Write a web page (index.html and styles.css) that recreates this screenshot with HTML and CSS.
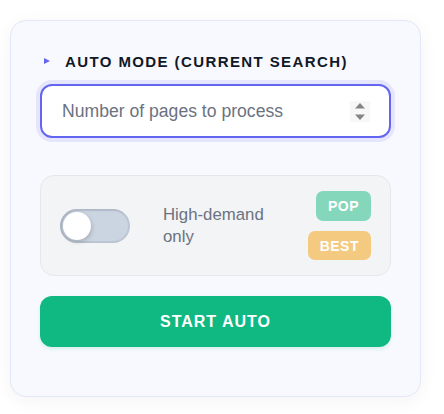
FILE: index.html
```html
<!DOCTYPE html>
<html lang="en">
<head>
<meta charset="utf-8">
<title>Auto mode</title>
<link rel="stylesheet" href="styles.css">
</head>
<body>
<div class="card">
  <div class="title">
    <svg class="marker" width="6" height="6" viewBox="0 0 6 6"><path d="M0 0 L6 3 L0 6 Z" fill="#6366f1"/></svg>
    <span>AUTO MODE (CURRENT SEARCH)</span>
  </div>
  <div class="field">
    <input class="pages" type="number" placeholder="Number of pages to process">
    <svg class="spin" width="20" height="21" viewBox="0 0 20 21" aria-hidden="true">
      <rect x="0" y="0" width="20" height="21" fill="#f7f7f8"/>
      <path d="M5 7.5 L10 2 L15 7.5 Z" fill="#858585"/>
      <path d="M5 13.5 L15 13.5 L10 19 Z" fill="#858585"/>
    </svg>
  </div>
  <div class="options">
    <div class="switch"><span class="knob"></span></div>
    <div class="label">High-demand only</div>
    <div class="badges">
      <span class="badge pop">POP</span>
      <span class="badge best">BEST</span>
    </div>
  </div>
  <button class="start">START AUTO</button>
</div>
</body>
</html>
```

FILE: styles.css
```css
* { box-sizing: border-box; }
html, body { margin: 0; padding: 0; background: #ffffff; }
body {
  font-family: "Liberation Sans", Arial, sans-serif;
  padding: 20px 10px;
}
.card {
  width: 411px;
  background: #f8f9fe;
  border: 1px solid #e3e8f6;
  border-radius: 16px;
  padding: 29px 29px 49px;
  box-shadow: 0 4px 18px rgba(30, 40, 90, 0.05);
}
.title {
  display: flex;
  align-items: center;
  height: 22px;
  margin-bottom: 12px;
  color: #111827;
  font-size: 15px;
  font-weight: 700;
  letter-spacing: 1.4px;
}
.marker { margin-left: 4px; margin-right: 15px; flex: none; }
.field { display: flex; position: relative; }
.pages {
  width: 100%;
  height: 54px;
  border: 2px solid #6366f1;
  border-radius: 12px;
  background: #ffffff;
  box-shadow: 0 0 0 4px rgba(99, 102, 241, 0.13);
  padding: 0 20px;
  font-family: "Liberation Sans", Arial, sans-serif;
  font-size: 17.6px;
  color: #374151;
  outline: none;
  -moz-appearance: textfield;
}
.pages::placeholder { color: #6b7280; }
.pages::-webkit-inner-spin-button,
.pages::-webkit-outer-spin-button { -webkit-appearance: none; margin: 0; }
.spin {
  position: absolute;
  right: 21px;
  top: 16.5px;
  pointer-events: none;
}
.options {
  display: flex;
  align-items: center;
  gap: 32px;
  margin-top: 37px;
  padding: 15px 19px;
  background: #f3f4f6;
  border: 1px solid #e5e7eb;
  border-radius: 14px;
}
.switch {
  flex: none;
  width: 70px;
  height: 34px;
  border-radius: 17px;
  background: #cbd5e1;
  box-shadow: inset 0 0 0 2px rgba(120, 135, 160, 0.18), inset 2px 1px 3px rgba(0, 0, 0, 0.12);
  display: flex;
  align-items: center;
  padding: 0 3px;
}
.knob {
  width: 28px;
  height: 28px;
  border-radius: 50%;
  background: #ffffff;
  box-shadow: 1px 2px 4px rgba(0, 0, 0, 0.18);
}
.label {
  flex: 1;
  font-size: 16.8px;
  line-height: 22px;
  color: #6b7280;
  padding-left: 1px;
}
.badges {
  display: flex;
  flex-direction: column;
  align-items: flex-end;
  gap: 10px;
}
.badge {
  display: flex;
  align-items: center;
  height: 30px;
  padding: 0 12px;
  border-radius: 7px;
  color: #ffffff;
  font-size: 14px;
  font-weight: 700;
  letter-spacing: 0.5px;
}
.badge.best { height: 29px; }
.pop { background: #84d7bb; }
.best { background: #f4ca80; }
.start {
  display: block;
  width: 100%;
  height: 51px;
  margin-top: 20px;
  border: none;
  border-radius: 12px;
  background: #10b981;
  color: #ffffff;
  font-family: "Liberation Sans", Arial, sans-serif;
  font-size: 16px;
  font-weight: 700;
  letter-spacing: 1px;
  box-shadow: 0 2px 4px rgba(16, 185, 129, 0.15);
  cursor: pointer;
}
```
